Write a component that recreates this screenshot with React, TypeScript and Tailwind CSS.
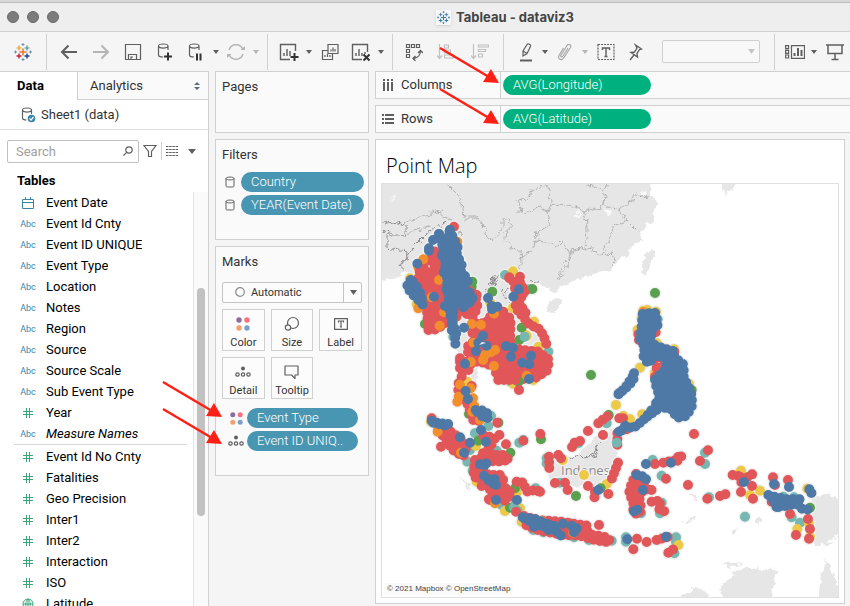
import React from "react";

type Layer = { color: string; dots?: number[][]; lines?: string; areas?: string };
type Region = { x: number; y: number; layers: Layer[] };

const RED = "#e15759";
const BLUE = "#4e79a7";
const ORANGE = "#f28e2b";
const GREEN = "#59a14f";
const YELLOW = "#edc948";
const TEAL = "#76b7b2";

// Every region has its own origin on the map and is drawn on a grid of one third of a map unit.
const regions: Region[] = [
  {
    x: 380,
    y: 180,
    layers: [
      { color: TEAL, dots: [[375, 285], [447, 328], [434, 470], [505, 515], [392, 605], [128, 300], [220, 470], [475, 540]] },
      { color: YELLOW, dots: [[399, 274], [90, 295], [462, 425], [437, 465], [475, 500], [478, 515], [398, 384], [400, 612], [460, 600], [110, 372], [262, 605]] },
      { color: GREEN, dots: [[277, 305], [457, 327], [425, 443], [418, 480], [483, 538], [135, 432], [415, 605], [275, 320], [452, 580]] },
      { color: YELLOW, dots: [[330, 367], [440, 468]] },
      { color: TEAL, dots: [[434, 470]] },
      { color: ORANGE, dots: [[232, 185], [115, 262], [115, 385]] },
      {
        color: RED,
        dots: [[222, 140], [388, 295], [370, 395], [240, 535], [290, 345], [245, 590]],
        areas:
          "M165 215 145 245 115 280 118 310 135 340 150 380 140 400 145 430 142 450 170 448 195 430 230 410 220 330 190 250ZM265 330 285 345 293 382 278 410 245 395 230 350ZM345 385 350 400 322 415 320 430 280 430 275 455 290 480 265 495 262 515 295 530 285 545 300 545 345 560 350 590 362 597 410 592 430 597 470 592 500 572 508 540 475 515 430 510 400 505 390 480 392 415 365 400ZM240 545 240 575 258 575 272 565 270 545Z",
        lines:
          "M388 292 410 315 433 325 M420 290 420 310 435 332 425 350 405 370 412 390 430 412 450 435 475 445 490 465 500 495 M430 340 408 355 M405 325 412 345 M418 370 445 412",
      },
      { color: GREEN, dots: [[337, 335]] },
      {
        color: ORANGE,
        dots: [[130, 238], [177, 300], [155, 352], [192, 397], [179, 437], [275, 432], [303, 434], [342, 401], [280, 488], [345, 510], [333, 517], [315, 525], [309, 540], [342, 558], [273, 546], [440, 587]],
      },
      {
        color: BLUE,
        dots: [[210, 150], [177, 162], [159, 180], [147, 212], [112, 251], [162, 350], [324, 354], [336, 388], [352, 380], [335, 378], [309, 467], [295, 488], [320, 497], [288, 514], [378, 498], [399, 503], [393, 530], [453, 527], [427, 548], [448, 553], [447, 597], [255, 551], [417, 328], [400, 350], [252, 443], [250, 382], [195, 378]],
        areas:
          "M210 150 220 175 233 200 230 225 245 252 243 275 264 298 262 312 235 335 220 350 210 340 197 325 205 300 190 275 200 250 185 225 195 195ZM92 300 80 320 95 340 115 360 128 374 124 345 108 315ZM235 355 270 338 280 360 250 380Z",
        lines:
          "M177 162 190 205 195 240 M147 205 147 220 M205 340 208 370 210 400 218 430 225 470 227 505 M222 360 218 430 232 470 M218 400 215 465",
      },
    ],
  },
  {
    x: 560,
    y: 180,
    layers: [
      { color: GREEN, dots: [[285, 339], [93, 585], [395, 630]] },
      { color: TEAL, dots: [[293, 418]] },
      { color: YELLOW, dots: [[250, 392], [262, 390], [288, 395], [245, 415], [233, 450], [240, 563], [387, 612], [290, 490], [305, 503], [342, 508], [285, 580], [168, 675], [247, 703], [210, 718], [190, 708], [315, 670]] },
      { color: ORANGE, dots: [[250, 396]] },
      { color: RED, dots: [[235, 463], [237, 480], [287, 457], [292, 545], [290, 565], [343, 515], [189, 715], [200, 748], [285, 590]] },
      {
        color: BLUE,
        areas:
          "M248 402 285 398 287 405 293 435 275 450 272 490 300 502 342 514 343 535 368 548 371 570 371 593 393 635 397 675 380 708 350 714 338 690 285 675 300 650 290 625 285 598 318 568 318 535 290 525 264 551 250 527 255 500 240 480 245 440Z",
        lines: "M222 580 220 600 205 618 180 638 M218 590 195 625 175 643 M300 670 275 690 255 715 235 733 218 745 195 737 183 755 M290 690 262 710",
      },
    ],
  },
  {
    x: 380,
    y: 380,
    layers: [
      {
        color: TEAL,
        dots: [[418, 188], [430, 180], [325, 138], [285, 160], [270, 210], [262, 245], [350, 212], [278, 272], [405, 375], [500, 235], [500, 250], [540, 308], [467, 325], [680, 130], [595, 190], [582, 472], [627, 480], [695, 482], [333, 108], [365, 375], [460, 450], [490, 457], [570, 430]],
      },
      { color: YELLOW, dots: [[400, 10], [375, 393], [290, 305], [288, 198], [153, 125], [425, 425], [680, 312], [410, 338], [603, 467], [548, 240], [420, 385]] },
      { color: GREEN, dots: [[483, 178], [391, 218], [355, 128], [267, 102], [588, 348], [662, 325], [686, 105], [295, 182], [415, 5], [390, 383], [405, 325]] },
      { color: TEAL, dots: [[402, 382], [412, 392]] },
      {
        color: RED,
        dots: [[236, 10], [275, 18], [417, 30], [155, 115], [183, 200], [352, 128], [358, 165], [378, 193], [305, 318], [408, 395], [430, 182], [481, 162], [535, 225], [543, 235], [525, 309], [563, 330], [555, 308], [624, 153], [669, 165], [624, 318], [657, 435], [718, 115], [330, 360], [480, 335]],
        areas:
          "M175 150 205 150 240 175 260 200 250 230 215 208 203 185ZM310 165 345 175 325 210 300 225 310 240 350 245 388 240 370 225 335 225 320 190ZM285 240 300 260 325 285 360 285 370 295 365 325 385 325 395 345 375 362 345 350 325 360 340 340 305 300 280 290ZM432 408 470 420 543 425 620 437 625 462 685 473 690 487 650 482 600 467 550 465 480 452 440 438Z",
        lines: "M235 30 240 45 265 75 280 120 310 125 M355 0 410 0 M410 305 430 308 440 335 465 330 480 335 M507 230 508 265 M600 183 578 190 575 208 M655 130 670 118 684 108 M712 160 712 210 M714 248 695 298 M645 335 643 358 M685 342 675 350",
      },
      { color: YELLOW, dots: [[612, 285]] },
      { color: ORANGE, dots: [[240, 14], [272, 25], [236, 50], [232, 65], [279, 55], [283, 78], [277, 95], [300, 120], [173, 155], [243, 218], [345, 370], [485, 422], [580, 458]] },
      {
        color: BLUE,
        dots: [[257, 33], [264, 57], [240, 172], [270, 188], [303, 150], [318, 185], [252, 218], [312, 287], [348, 315], [348, 360], [411, 360], [655, 330], [717, 40], [717, 155], [462, 440], [505, 450], [549, 431], [582, 457]],
        areas: "M287 90 315 92 328 108 320 116 300 105ZM300 253 325 250 322 254 302 256ZM325 298 345 298 345 312 330 308ZM428 412 470 418 520 440 490 440 440 420Z",
        lines: "M155 122 175 130 205 132 218 140 M160 128 200 138 M490 430 530 440 510 455 M530 455 543 467 M575 437 595 447 590 450",
      },
    ],
  },
  {
    x: 610,
    y: 380,
    layers: [
      {
        color: TEAL,
        dots: [[128, 240], [285, 218], [285, 252], [155, 287], [297, 352], [405, 410], [545, 412], [570, 428], [198, 472], [198, 485], [48, 472], [48, 485], [150, 400], [520, 350], [552, 352], [193, 520], [155, 368], [93, 400], [20, 188]],
      },
      { color: YELLOW, dots: [[393, 272], [420, 345], [450, 332], [592, 326], [562, 447], [597, 432], [205, 495], [600, 470], [80, 285]] },
      { color: GREEN, dots: [[600, 383]] },
      {
        color: RED,
        dots: [[252, 162], [294, 211], [270, 243], [135, 252], [168, 296], [234, 315], [292, 356], [393, 336], [426, 318], [429, 356], [489, 292], [495, 315], [534, 300], [485, 365], [540, 402], [594, 417], [600, 447], [597, 476], [558, 465], [81, 476], [110, 486], [70, 508]],
        areas: "M78 282 65 310 57 340 70 365 70 400 90 402 92 370 85 345 105 325 100 300Z",
        lines: "M160 248 200 240 207 225 215 228 200 245 M330 348 348 342 M368 285 385 288 400 300 425 283 438 284 M390 290 395 310 M80 345 115 325 135 335 M125 365 150 362 148 390 173 396 M140 480 175 470 M175 518 190 508 203 500",
      },
      {
        color: BLUE,
        dots: [[108, 252], [183, 248], [99, 330], [82, 389], [72, 394], [52, 478], [168, 470], [402, 306], [492, 312], [537, 321], [108, 298]],
        areas: "M475 345 500 352 530 358 570 358 565 372 540 375 502 382 495 362ZM598 328 606 332 606 340 600 337Z",
        lines: "M80 285 100 290 103 302 M565 375 572 386 601 389 M485 350 500 382",
      },
    ],
  },
];

// Outlines and chains are dashed with round caps, so that they read as rows of overlapping marks.
function Marks({ region, halo }: { region: Region; halo?: boolean }) {
  return (
    <g transform={`translate(${region.x} ${region.y}) scale(${1 / 3})`} strokeWidth={halo ? 38 : 30} strokeLinecap="round" strokeLinejoin="round">
      {region.layers.map((l, i) => {
        const c = halo ? "#f0f0f0" : l.color;
        return (
          <g key={i} stroke={c}>
            {l.areas && <path d={l.areas} fill={c} strokeDasharray="0 19" />}
            {l.lines && <path d={l.lines} fill="none" strokeDasharray="0 17" />}
            {l.dots && <path d={l.dots.map(([x, y]) => `M${x} ${y}h0`).join("")} fill="none" />}
          </g>
        );
      })}
    </g>
  );
}

function PointMap() {
  return (
    <svg viewBox="382 184 456 413" preserveAspectRatio="xMidYMid slice" className="absolute inset-0 h-full w-full" role="img" aria-label="Point map of Southeast Asia">
      <filter id="coast" x="-2%" y="-2%" width="104%" height="104%">
        <feTurbulence type="fractalNoise" baseFrequency="0.16" numOctaves="3" seed="4" result="n" />
        <feDisplacementMap in="SourceGraphic" in2="n" scale="9" xChannelSelector="R" yChannelSelector="G" />
      </filter>
      <g fill="#e6e6e6" filter="url(#coast)">
        <path d="M376 178H651L650 189 650 194 658 205 654 211 652 221 644 227 640 239 632 247 627 255 616 262 610 270 598 272 587 277 573 281 561 286 554 293 549 287 541 286 533 284 520 290 528 312 545 345 542 372 520 378 500 375 490 363 478 365 476 385 470 400 462 380 458 352 448 325 430 330 422 320 418 300 411 277 407 270 402 274 394 278 376 279Z" />
        <path d="M546 308 549 301 556 298 562 299 560 306 553 313 547 312ZM642 262 647 254 652 250 655 252 652 262 647 271 646 278 642 271ZM545 465 565 458 580 455 600 432 612 430 615 450 620 470 610 486 590 488 565 484 550 478ZM684 520 698 516 686 524ZM722 178H736L733 190 726 194 722 189ZM757 514 761 521 757 526ZM732 530 738 528 733 536Z" />
        <path d="M810 494 824 494 842 500V535L828 540 833 544 815 545 810 525ZM721 603 720 587 733 575 745 567 757 569 778 570 773 585 769 603ZM682 596 695 587 707 592V603H682ZM819 603 820 580 826 560 830 570 842 592V603ZM724 564 742 562 730 568ZM690 495 698 495 696 500ZM450 456 454 461 450 459ZM460 476 473 493 465 487Z" />
      </g>
      <g fill="#fafafa" filter="url(#coast)">
        <path d="M570 214 576 215 580 210 579 218 572 217ZM604 209 612 211 608 218ZM638 193 647 192 643 197ZM390 199 397 195 395 200Z" />
      </g>
      <g fill="none" stroke="#b0b0b0" strokeWidth="1" strokeLinejoin="round" filter="url(#coast)">
        <path d="M443 178 451 188 458 195 461 200 463 209 464 220 467 218 476 218 484 227 487 237 492 242 498 232 502 230 502 221 510 219 512 227 506 231 505 240 511 247 520 252 521 263 517 271M517 212 521 212 522 207 517 201 527 199 532 190 542 188 544 184M547 184 550 192 551 205 548 212 538 207 525 215 521 212M548 212 550 225 537 232 535 241 547 242 553 247 564 242 570 255 560 270 557 281M551 205 560 203 572 206 584 211 586 222 587 230 585 248 592 250 600 255 612 253 615 264M584 211 600 207 604 205 605 194 598 188 586 184M605 206 620 210 626 220 635 229 641 231M626 221 614 226 610 236 604 251M620 210 630 202 637 194 649 198M585 248 572 250 568 265 560 277M404 223 415 219 425 214 432 213 441 211 445 218 452 220M402 235 414 231 429 227M535 241 533 252 520 258M607 184 604 192" />
        <path d="M382 224 394 222 405 225 405 235 392 235 387 231 382 233M387 234V248L398 250 407 251 408 258 402 261 399 267 405 272M408 258 415 245 425 235 436 226 448 222M487 285 496 282 500 274 494 278 490 290M500 290 508 300 510 306 498 308M460 229V235M530 280 538 284M495 275 493 286 484 290 494 304M510 290 505 293M569 460 580 455 585 458 595 455 598 444 602 441" stroke="#8c8c8c" />
      </g>
      <text x="561" y="475" fill="#8a8a8a" stroke="#f2f2f2" strokeWidth="2" paintOrder="stroke" className="font-['Open_Sans',sans-serif] text-[13px]">Indones</text>
      {regions.map((r, i) => <Marks key={i} region={r} halo />)}
      {regions.map((r, i) => <Marks key={i} region={r} />)}
      <path d="M428 265l2 1-1 2zM479 345l3-3 4 1zM658 362l2 0-1 1z" fill="#f2f2f2" />
    </svg>
  );
}

function Ic({ w = 18, h = 18, children, c = "#5f5f5f" }: { w?: number; h?: number; children: React.ReactNode; c?: string }) {
  return (
    <svg width={w} height={h} viewBox={`0 0 ${w} ${h}`} fill="none" stroke={c} strokeWidth="1.2" className="shrink-0" aria-hidden="true">
      {children}
    </svg>
  );
}

const TableauMark = ({ mono, size = 18 }: { mono?: string; size?: number }) => (
  <svg width={size} height={size} viewBox="0 0 18 18" fill="none" strokeWidth="1.2" aria-hidden="true">
    <path stroke={mono ?? "#e8762d"} d="M9 5.5v7M5.5 9h7" strokeWidth="1.5" />
    <path stroke={mono ?? "#eb9c2a"} d="M5 2.5v5M2.5 5h5" />
    <path stroke={mono ?? "#4a8fa0"} d="M13 2.5v5M10.5 5h5" />
    <path stroke={mono ?? "#c72035"} d="M5 10.5v5M2.5 13h5" strokeWidth="1.4" />
    <path stroke={mono ?? "#1f447e"} d="M13 10.5v5M10.5 13h5" strokeWidth="1.4" />
    <path stroke={mono ?? "#6c91ae"} strokeWidth="1" d="M9 0v3M7.5 1.5h3M9 15v3M7.5 16.5h3M1.5 7.5v3M0 9h3M16.5 7.5v3M15 9h3" />
  </svg>
);

function Tool({ label, cls, children }: { label: string; cls: string; children: React.ReactNode }) {
  return (
    <button aria-label={label} className={`flex h-8 shrink-0 items-center justify-center ${cls}`}>
      {children}
    </button>
  );
}

const Caret = ({ light = false, label }: { light?: boolean; label: string }) => (
  <Tool label={label} cls="w-2.5">
    <svg width="6" height="4" viewBox="0 0 6 4" aria-hidden="true"><path d="M0 0h6L3 4z" fill={light ? "#b5b5b5" : "#5f5f5f"} /></svg>
  </Tool>
);

const Sep = ({ cls }: { cls: string }) => <div className={`h-9 w-px shrink-0 bg-[#d0d0d0] ${cls}`} />;

const Cyl = "M2.5 4v9c0 1.2 2 2 4.500 2M12 4v4M2.5 4C2.5 1.3 12 1.3 12 4S2.5 6.7 2.5 4z";

function Toolbar() {
  return (
    <div className="flex h-[39px] shrink-0 items-center overflow-hidden bg-[#f5f5f5]">
      <Tool label="Start page" cls="w-[46px]"><TableauMark /></Tool>
      <Sep cls="mr-1.5" />
      <Tool label="Undo" cls="w-8"><Ic><path d="M17 9H2M8.5 2.5 2 9l6.5 6.5" strokeWidth="2" /></Ic></Tool>
      <Tool label="Redo" cls="w-8"><Ic c="#b5b5b5"><path d="M1 9h15M9.5 2.5 16 9l-6.5 6.5" strokeWidth="2" /></Ic></Tool>
      <Tool label="Save" cls="w-8"><Ic><path d="M1.5 1.5h15v15h-15zM4.5 16v-4.500h8V16M7 16v-2h2" /></Ic></Tool>
      <Tool label="New data source" cls="w-8"><Ic w={18} h={20}><path d={Cyl} /><path d="M12 10.5v8M8 14.5h8" stroke="#333" strokeWidth="2" /></Ic></Tool>
      <Tool label="Pause auto updates" cls="w-[30px]"><Ic w={18} h={20}><path d={Cyl} /><path d="M10 11.5v7M13.5 11.5v7" stroke="#333" strokeWidth="2" /></Ic></Tool>
      <Caret label="Update options" />
      <Tool label="Refresh" cls="w-[30px]"><Ic c="#b5b5b5"><path d="M2 7a7.3 7.3 0 0 1 14 0M16 11a7.3 7.3 0 0 1-14 0" strokeWidth="1.4" /><path d="M13.5 7H18V3zM4.5 11H0v4z" fill="#b5b5b5" stroke="none" /></Ic></Tool>
      <Caret light label="Refresh options" />
      <Sep cls="mr-1.5 ml-1.5" />
      <Tool label="New worksheet" cls="w-[30px]"><Ic w={20} h={20}><path d="M16.5 9V2.5h-15v15H11M5 14v-3M8 14V7M11 14V9" strokeWidth="1.4" /><path d="M15.5 11v8M11.5 15h8" stroke="#333" strokeWidth="2" /></Ic></Tool>
      <Caret label="New sheet options" />
      <Tool label="Duplicate" cls="w-8"><Ic><path d="M7 1.5h10v9H7zM7 7.5H1.5v9h10v-6M10 8.5v-2M12 8.5v-4M14 8.5V6M4 14v-2M6.5 14v-3M9 14v-2" /></Ic></Tool>
      <Tool label="Clear sheet" cls="w-[30px]"><Ic w={20} h={20}><path d="M16.5 10V2.5h-15v15H11M5 14v-3M8 14V7M11 14v-3M14 10v2" strokeWidth="1.4" /><path d="m12.5 12.5 6 6M18.5 12.5l-6 6" stroke="#333" strokeWidth="2" /></Ic></Tool>
      <Caret label="Clear options" />
      <Sep cls="mr-1.5 ml-1.5" />
      <Tool label="Swap rows and columns" cls="w-[30px]"><Ic><path d="M1.5 1.5h3v3h-3zM6.5 1.5h3v3h-3zM11.5 1.5h3v3h-3zM1.5 6.5h3v3h-3zM1.5 11.5h3v3h-3z" /><path d="M15.5 8c0 4-3 7-7 7.5M13 10l2.5-2.5L18 10M10.5 13 8 15.5l2.5 2.5" strokeWidth="1.3" /></Ic></Tool>
      <Tool label="Sort ascending" cls="w-[34px]"><Ic c="#c0c0c0"><path d="M2.5 1v14M0 12.5l2.5 3 2.5-3M7.5 2h4v3h-4zM7.5 7h6v3h-6zM7.5 12h9v3h-9z" /></Ic></Tool>
      <Tool label="Sort descending" cls="w-[34px]"><Ic c="#c0c0c0"><path d="M2.5 1v14M0 12.5l2.5 3 2.5-3M7.5 2h10v2h-10zM7.5 6.5h7v2h-7zM7.5 11h4v3h-4z" /></Ic></Tool>
      <Sep cls="mr-2 ml-1.5" />
      <Tool label="Highlight" cls="w-7"><Ic w={14} h={20}><path d="m4 9 4-6.5c1-1.5 4.5 0 3.5 2L8 11.5 4 14zM4 9l4 2.500" strokeWidth="1.2" /><path d="M1 18.5h12" strokeWidth="2" /></Ic></Tool>
      <Caret label="Highlight options" />
      <Tool label="Group" cls="w-[30px]"><Ic w={14} c="#a8a8a8"><path d="m10 5-5 8c-1 1.5-3 .5-2-1l6-9.500c1.5-2.300 5-.5 3.500 2L6 14.500c-2.500 4-7 1-5-2L5.500 5" strokeWidth="1.2" /></Ic></Tool>
      <Caret light label="Group options" />
      <Tool label="Show mark labels" cls="w-8"><Ic><path d="M1 1.5h16v15H1z" strokeDasharray="2 1" /><path d="M5.500 7V5h7v2M9 5v8.5M7.5 13.5h3" strokeWidth="1.4" /></Ic></Tool>
      <Tool label="Fix axes" cls="w-7"><Ic w={14}><path d="m6.5 2 6 4-2 .5-2.5 4 .5 3.500L2 9.500l3.500-.5L8 5zM5 12l-4 5" strokeWidth="1.4" /></Ic></Tool>
      <div className="relative ml-3 w-[98px] shrink-0">
        <select aria-label="Fit" defaultValue="" className="block h-[23px] w-full appearance-none rounded-xs border border-[#d0d0d0] bg-[#f8f8f8]"><option value=""></option></select>
        <svg width="7" height="5" viewBox="0 0 7 5" className="pointer-events-none absolute top-[9px] right-[5px]" aria-hidden="true"><path d="M0 0h7L3.5 5z" fill="#c4c4c4" /></svg>
      </div>
      <Sep cls="mr-1.5 ml-3.5" />
      <Tool label="Show Me" cls="w-7"><Ic w={20} h={16}><path d="M.6 1.6h3v3h-3zM.6 6.3h3v3h-3zM.6 11h3v3h-3zM6.5 1.6h13v12.800h-13z" /><path d="M9.5 12V9M13 12V4M16.500 12V6" strokeWidth="2" /></Ic></Tool>
      <Caret label="Show Me options" />
      <Tool label="Presentation mode" cls="w-8"><Ic><path d="M0 2h18M2 2v8.5h14V2M9 10.500V16M5.5 16.500h7" strokeWidth="1.5" /></Ic></Tool>
    </div>
  );
}

const dims = ["Event Date", "Event Id Cnty", "Event ID UNIQUE", "Event Type", "Location", "Notes", "Region", "Source", "Source Scale", "Sub Event Type", "Year", "Measure Names"];
const measures = ["Event Id No Cnty", "Fatalities", "Geo Precision", "Inter1", "Inter2", "Interaction", "ISO", "Latitude"];

const Hash = () => <Ic w={10} h={10} c="#3ba57a"><path d="M3.5 0v10M6.5 0v10M0 3.5h10M0 6.500h10" strokeWidth="1" /></Ic>;

function Field({ name }: { name: string }) {
  let icon: React.ReactNode = <span className="text-[9px] text-[#3b85a6]">Abc</span>;
  if (name === "Event Date") icon = <Ic w={12} h={12} c="#3b85a6"><path d="M.5 2.500h11v9H.5zM.5 5.500h11M3.500 0v3M8.500 0v3" strokeWidth="1" /></Ic>;
  else if (name === "Latitude") icon = <Ic w={12} h={12} c="#3ba57a"><path d="M1 6a5 5 0 1 0 10 0A5 5 0 1 0 1 6zM1 6h10M6 1v10M6 1c-3 3-3 7 0 10M6 1c3 3 3 7 0 10" strokeWidth="1" /></Ic>;
  else if (name === "Year" || measures.includes(name)) icon = <Hash />;
  return (
    <li>
      <button className="flex h-[21px] w-full items-center text-left">
        <span className="mr-2.5 ml-5 flex w-4 shrink-0 items-center justify-center">{icon}</span>
        <span className={`truncate text-black ${name === "Measure Names" ? "italic" : ""}`}>{name}</span>
      </button>
    </li>
  );
}

function Sidebar() {
  return (
    <aside className="flex w-[209px] shrink-0 flex-col border-r border-[#d0d0d0] bg-white">
      <div className="flex h-[29px] shrink-0" role="tablist">
        <button role="tab" aria-selected="true" className="w-[77px] border-t border-[#d0d0d0] pr-4 font-bold text-black">Data</button>
        <button role="tab" aria-selected="false" className="flex flex-1 items-center justify-between border-t border-b border-l border-[#d0d0d0] bg-[#fafafa] pr-2 pl-3">
          Analytics
          <svg width="6" height="8" viewBox="0 0 6 8" aria-hidden="true"><path d="M0 3h6L3 0zM0 5h6L3 8z" fill="#5a6b7d" /></svg>
        </button>
      </div>
      <button className="flex h-[30px] shrink-0 items-center gap-1 border-b border-[#e0e0e0] pl-5">
        <Ic w={17} h={18}><path d="M2.5 4v8c0 1.2 2 2 4 2M11.500 4v4M2.500 4c0-2.700 9-2.700 9 0s-9 2.700-9 0z" /><circle cx="11.500" cy="12.500" r="3.800" fill="#3b85a6" stroke="none" /><path d="m9.5 12.5 1.5 1.5 2.5-3" stroke="#fff" /></Ic>
        Sheet1 (data)
      </button>
      <div className="mt-[9px] flex h-6 shrink-0 items-center pl-[7px]">
        <div className="relative w-[132px]">
          <input aria-label="Search" placeholder="Search" className="block h-[23px] w-full rounded-xs border border-[#c0c0c0] px-2 placeholder:text-[#a0a0a0]" />
          <svg width="10" height="10" viewBox="0 0 10 10" fill="none" stroke="#5f5f5f" strokeWidth="1.2" className="absolute top-1.5 right-1.5" aria-hidden="true"><circle cx="6" cy="4" r="3.2" /><path d="M3.700 6.300.5 9.500" /></svg>
        </div>
        <button aria-label="Filter fields" className="ml-1"><Ic w={14} h={14}><path d="M1 1.500h12L8.500 7.500v5h-3v-5z" /></Ic></button>
        <div className="mx-1 h-[18px] w-px bg-[#d0d0d0]" />
        <button aria-label="View as" className="flex items-center gap-2.5">
          <Ic w={12} h={10}><path d="M0 .5h12M0 3.500h12M0 6.500h12M0 9.500h12" strokeDasharray="2.5 .7" strokeWidth="1" /></Ic>
          <svg width="8" height="5" viewBox="0 0 8 5" aria-hidden="true"><path d="M0 0h8L4 5z" fill="#5f5f5f" /></svg>
        </button>
      </div>
      <h2 className="mt-2 mb-px ml-[17px] h-5 shrink-0 font-bold leading-5 text-black">Tables</h2>
      <div className="flex min-h-0 flex-1 overflow-hidden">
        <div className="min-w-0 flex-1">
          <ul>{dims.map((d) => <Field key={d} name={d} />)}</ul>
          <hr className="mr-1.5 mb-px ml-3.5 border-[#d8d8d8]" />
          <ul>{measures.map((d) => <Field key={d} name={d} />)}</ul>
        </div>
        <div className="w-[15px] border-l border-[#e6e6e6] bg-[#fafafa] pt-24 pl-[3px]">
          <div className="h-[228px] w-2 rounded-full bg-[#c1c1c1]" />
        </div>
      </div>
    </aside>
  );
}

const ColorDots = ({ size = 14 }: { size?: number }) => (
  <svg width={size} height={size} viewBox="0 0 14 14" aria-hidden="true">
    <circle cx="3" cy="3" r="2.700" fill="#8a6d9a" /><circle cx="11" cy="3" r="2.700" fill="#f9717f" />
    <circle cx="3" cy="11" r="2.700" fill="#f0a073" /><circle cx="11" cy="11" r="2.700" fill="#7ba1cb" />
  </svg>
);
const DetailDots = () => <Ic w={16} h={12}><circle cx="8" cy="2.500" r="2" fill="#5f5f5f" stroke="none" /><circle cx="2.500" cy="8.500" r="1.700" /><circle cx="8" cy="8.500" r="1.700" /><circle cx="13.500" cy="8.500" r="1.700" /></Ic>;
const SmallCyl = () => <Ic w={10} h={12}><path d="M1 2.500v7.500c0 .8.5 1 4 1s4-.2 4-1V2.500C9 .6 1 .6 1 2.500s8 1.900 8 0" strokeWidth="1" /></Ic>;

const Pill = ({ children, cls }: { children: string; cls: string }) => (
  <button className={`h-5 truncate rounded-full pl-2.5 text-left font-light leading-5 text-white ${cls}`}>{children}</button>
);

function MarkButton({ label, children }: { label: string; children: React.ReactNode }) {
  return (
    <button className="flex h-[42px] flex-col items-center border border-[#d0d0d0] bg-[#fcfcfc] text-[11px]">
      <span className="flex h-[27px] shrink-0 items-center">{children}</span>
      <span className="leading-3">{label}</span>
    </button>
  );
}

function Cards() {
  return (
    <div className="mx-1.5 flex w-[154px] shrink-0 flex-col gap-1.5">
      <section className="h-[62px] border border-[#d0d0d0] bg-[#fafafa] px-1.5 pt-1.5"><h2>Pages</h2></section>
      <section className="h-[101px] border border-[#d0d0d0] bg-[#fafafa] px-1.5 pt-1.5">
        <h2>Filters</h2>
        <div className="mt-2 -mr-0.5 flex flex-col gap-[3px]">
          {["Country", "YEAR(Event Date)"].map((f) => (
            <div key={f} className="flex items-center gap-1.5 pl-[3px]"><SmallCyl /><Pill cls="w-[123px] bg-[#4996b2]">{f}</Pill></div>
          ))}
        </div>
      </section>
      <section className="h-[230px] border border-[#d0d0d0] bg-[#fafafa] px-1.5 pt-1.5">
        <h2>Marks</h2>
        <div className="relative mt-[11px]">
          <select aria-label="Mark type" className="block h-[21px] w-full appearance-none rounded-xs border border-[#c4c4c4] bg-[#fcfcfc] pl-7 text-[11px]"><option>Automatic</option></select>
          <svg width="10" height="10" viewBox="0 0 10 10" fill="none" stroke="#8a8a8a" strokeWidth="1.2" className="pointer-events-none absolute top-[5px] left-[13px]" aria-hidden="true"><circle cx="5" cy="5" r="4.3" /></svg>
          <div className="pointer-events-none absolute top-0 right-0 flex h-[21px] w-[19px] items-center justify-center border-l border-[#c4c4c4]">
            <svg width="7" height="5" viewBox="0 0 7 5" aria-hidden="true"><path d="M0 0h7L3.5 5z" fill="#5f5f5f" /></svg>
          </div>
        </div>
        <div className="mt-1.5 grid grid-cols-3 gap-1.5">
          <MarkButton label="Color"><ColorDots /></MarkButton>
          <MarkButton label="Size"><Ic w={16} h={16}><circle cx="9" cy="7" r="5.5" /><circle cx="4" cy="11.500" r="2.700" fill="#fcfcfc" /></Ic></MarkButton>
          <MarkButton label="Label"><Ic w={14} h={12}><path d="M.6.6h12.800v10.800H.6z" /><path d="M4.500 4.500V3h5v1.500M7 3v6M6 9h2" /></Ic></MarkButton>
          <MarkButton label="Detail"><DetailDots /></MarkButton>
          <MarkButton label="Tooltip"><Ic w={15} h={14}><path d="M1 1h13v9h-3v3.500L7.500 10H1z" strokeLinejoin="round" /></Ic></MarkButton>
        </div>
        <div className="mt-[9px] flex flex-col gap-[3px]">
          <div className="flex items-center gap-[3px] pl-1.5"><span className="flex w-4 shrink-0 justify-center"><ColorDots size={13} /></span><Pill cls="w-[111px] bg-[#4996b2]">Event Type</Pill></div>
          <div className="flex items-center gap-[3px] pl-1.5"><DetailDots /><Pill cls="w-[111px] bg-[#4996b2]">Event ID UNIQ..</Pill></div>
        </div>
      </section>
    </div>
  );
}

function Shelf({ label, pill, icon }: { label: string; pill: string; icon: React.ReactNode }) {
  return (
    <div className="flex h-7 shrink-0 items-center border border-r-0 border-[#d0d0d0] bg-[#fafafa]">
      <div className="flex h-full w-[125px] items-center gap-[7px] border-r border-[#d0d0d0] pl-1.5">{icon}{label}</div>
      <Pill cls="ml-0.5 w-[148px] bg-[#00b180]">{pill}</Pill>
    </div>
  );
}

const Arrow = ({ x, y }: { x: number; y: number }) => (
  <g transform={`translate(${x} ${y})`}>
    <path d="M-59-35-10-6" stroke="#ff2015" strokeWidth="2.5" />
    <path d="M0 0-16-1-8-14z" fill="#ff2015" />
  </g>
);

export default function App() {
  return (
    <div className="relative flex h-screen min-h-[480px] flex-col overflow-hidden bg-[#f5f5f5] font-['Roboto','Liberation_Sans',sans-serif] text-[13px] leading-[18px] text-[#333]">
      <div className="h-[3px] shrink-0 border-b border-[#bdbdbd] bg-[#d8d8d8]" />
      <header className="relative flex h-[29px] shrink-0 items-center justify-center gap-[5px] border-b border-[#d0d0d0] bg-[#eeeeee] pl-40">
        <div className="absolute top-2 left-[7px] flex gap-2">
          {["Close", "Minimize", "Zoom"].map((b) => <button key={b} aria-label={b} className="h-3 w-3 rounded-full border border-[#6a6a6a] bg-[#7c7c7c]" />)}
        </div>
        <span className="bg-[#f8f8f8] p-px shadow-sm"><TableauMark mono="#3b7ba5" size={13} /></span>
        <h1 className="font-['Inter',sans-serif] font-bold text-[#444]">Tableau - dataviz3</h1>
      </header>
      <Toolbar />
      <div className="flex min-h-0 flex-1">
        <Sidebar />
        <Cards />
        <main className="flex min-w-0 flex-1 flex-col gap-1.5">
          <Shelf label="Columns" pill="AVG(Longitude)" icon={<Ic w={12} h={12}><path d="M2 0v2M6 0v2M10 0v2M2 3v9M6 3v9M10 3v9" strokeWidth="2" /></Ic>} />
          <Shelf label="Rows" pill="AVG(Latitude)" icon={<Ic w={12} h={12}><path d="M0 2h2M0 6h2M0 10h2M3 2h9M3 6h9M3 10h9" strokeWidth="2" /></Ic>} />
          <section className="mr-[5px] mb-0.5 flex min-h-0 flex-1 flex-col border border-[#d0d0d0] bg-white px-[5px] pb-[5px]">
            <h2 className="flex h-[43px] shrink-0 items-center pt-2 pl-[5px] font-['Open_Sans',sans-serif] text-xl font-light text-black">Point Map</h2>
            <div className="relative min-h-0 flex-1 overflow-hidden border border-[#e0e0e0]">
              <PointMap />
              <p className="absolute bottom-0.5 left-0.5 bg-[#fafafa] px-[3px] font-['Liberation_Sans',sans-serif] text-[8px] leading-3 text-[#444]">© 2021 Mapbox © OpenStreetMap</p>
            </div>
          </section>
        </main>
      </div>
      <svg width="850" height="606" viewBox="0 0 850 606" className="pointer-events-none absolute top-0 left-0" aria-hidden="true">
        <Arrow x={499} y={83} />
        <Arrow x={499} y={124} />
        <Arrow x={222} y={417} />
        <Arrow x={222} y={444} />
      </svg>
    </div>
  );
}
